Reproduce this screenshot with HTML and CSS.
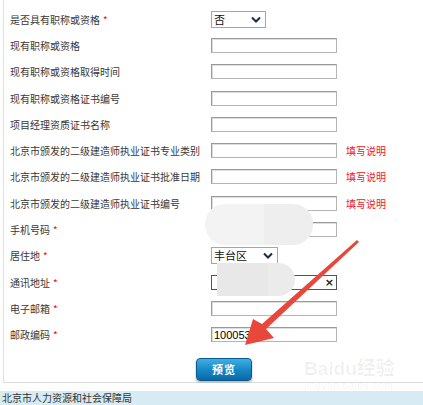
FILE: index.html
```html
<!DOCTYPE html>
<html lang="zh-CN">
<head>
    <meta charset="UTF-8">
    <title>信息填写</title>
    <link rel="stylesheet" href="styles.css">
</head>
<body>
    <div class="form">
        <div class="row">
            <label class="label">是否具有职称或资格<em>*</em></label>
            <div class="select short">
                <select><option>否</option></select>
                <svg width="10" height="7" viewBox="0 0 10 7"><path d="M1 1.5 L5 5.5 L9 1.5" fill="none" stroke="#1c2a4a" stroke-width="2"/></svg>
            </div>
        </div>
        <div class="row"><label class="label">现有职称或资格</label><input class="text" type="text"></div>
        <div class="row"><label class="label">现有职称或资格取得时间</label><input class="text" type="text"></div>
        <div class="row"><label class="label">现有职称或资格证书编号</label><input class="text" type="text"></div>
        <div class="row"><label class="label">项目经理资质证书名称</label><input class="text" type="text"></div>
        <div class="row">
            <label class="label">北京市颁发的二级建造师执业证书专业类别</label>
            <input class="text" type="text"><a class="note">填写说明</a>
        </div>
        <div class="row">
            <label class="label">北京市颁发的二级建造师执业证书批准日期</label>
            <input class="text" type="text"><a class="note">填写说明</a>
        </div>
        <div class="row">
            <label class="label">北京市颁发的二级建造师执业证书编号</label>
            <input class="text" type="text"><a class="note">填写说明</a>
        </div>
        <div class="row"><label class="label">手机号码<em>*</em></label><input class="text" type="text"></div>
        <div class="row">
            <label class="label">居住地<em>*</em></label>
            <div class="select wide">
                <select><option>丰台区</option></select>
                <svg width="10" height="7" viewBox="0 0 10 7"><path d="M1 1.5 L5 5.5 L9 1.5" fill="none" stroke="#1c2a4a" stroke-width="2"/></svg>
            </div>
        </div>
        <div class="row">
            <label class="label">通讯地址<em>*</em></label>
            <div class="clearable">
                <input type="text">
                <span class="clear">×</span>
            </div>
        </div>
        <div class="row"><label class="label">电子邮箱<em>*</em></label><input class="text" type="text"></div>
        <div class="row"><label class="label">邮政编码<em>*</em></label><input class="text" type="text" value="100053"></div>
        <div class="actions">
            <button class="btn" type="button">预览</button>
        </div>
    </div>
    <div class="footer">北京市人力资源和社会保障局</div>

    <!-- screenshot annotations -->
    <div class="blur blur-phone"></div>
    <div class="blur blur-addr"></div>
    <svg class="arrow" width="423" height="405" viewBox="0 0 423 405">
        <polygon points="245,345 253,319 262,324 357,240 359,242 266,329 274,338" fill="#e8483b"/>
    </svg>
    <div class="watermark">
        <div class="wm-logo">Bai<span class="paw">du</span>经验</div>
        <div class="wm-url">jingyan.baidu.com</div>
    </div>
</body>
</html>
```

FILE: styles.css
```css
body {
    margin: 0;
    font-family: "Noto Sans CJK SC", "Liberation Sans", sans-serif;
    font-size: 10px;
    color: #383838;
    background: #fff;
    overflow: hidden;
}

.form {
    box-sizing: border-box;
    height: 383px;
    margin-left: 3px;
    padding-top: 6px;
    border-left: 1px solid #e0e0e0;
    border-bottom: 1px solid #dcdcdc;
}

.row {
    display: flex;
    align-items: center;
    height: 26.3px;
    padding-left: 6px;
}

.label {
    width: 201px;
    flex-shrink: 0;
    white-space: nowrap;
}

.label em {
    font-style: normal;
    color: #f00;
    margin-left: 3px;
}

.text {
    box-sizing: border-box;
    width: 126px;
    height: 15px;
    margin: 0;
    padding: 0 2px;
    border: 1px solid #9a9a9a;
    border-right-color: #b5b5b5;
    border-bottom-color: #b5b5b5;
    box-shadow: inset 1px 1px 0 #dedede;
    font-family: "Liberation Sans", sans-serif;
    font-size: 11px;
    color: #000;
    outline: none;
}

.note {
    margin-left: 9px;
    color: #f0141e;
}

.select {
    box-sizing: border-box;
    display: flex;
    align-items: center;
    height: 17px;
    border: 1px solid #a6a6a6;
    background: #fff;
    padding-right: 4px;
}

.select.short { width: 55px; }
.select.wide { width: 67px; }

.select select {
    appearance: none;
    flex: 1;
    min-width: 0;
    border: none;
    background: transparent;
    padding: 0 0 0 2px;
    font-family: "Noto Sans CJK SC", sans-serif;
    font-size: 11px;
    line-height: 15px;
    color: #111;
    outline: none;
}

.clearable {
    box-sizing: border-box;
    display: flex;
    align-items: center;
    width: 126px;
    height: 15px;
    border: 1px solid #555;
    background: #fff;
}

.clearable input {
    flex: 1;
    min-width: 0;
    border: none;
    padding: 0;
    height: 13px;
    outline: none;
}

.clear {
    font-family: "DejaVu Sans", sans-serif;
    font-size: 11px;
    line-height: 11px;
    font-weight: bold;
    color: #222;
    margin-right: 2px;
}

.actions {
    padding: 10px 0 0 192px;
}

.btn {
    display: block;
    width: 56px;
    height: 23px;
    border: 1px solid #0a5a8c;
    border-radius: 4px;
    background: linear-gradient(#3fb0e4, #1789c6 50%, #0b6aa6);
    box-shadow: 0 1px 2px rgba(0, 0, 0, 0.35);
    color: #fff;
    font-family: "Noto Sans CJK SC", sans-serif;
    font-size: 11px;
    font-weight: bold;
    letter-spacing: 1px;
    cursor: pointer;
}

.footer {
    margin-top: 8px;
    height: 16px;
    line-height: 14px;
    padding-left: 2px;
    background: #d7ebf4;
    color: #333;
}

.blur {
    position: absolute;
    pointer-events: none;
}

.blur-phone {
    left: 205px;
    top: 204px;
    width: 108px;
    height: 41px;
    border-radius: 20px;
    background: linear-gradient(90deg, #f3f3f3 55%, #eeeeee 55%);
}

.blur-addr {
    left: 217px;
    top: 263px;
    width: 78px;
    height: 33px;
    border-radius: 0 17px 17px 0;
    background: linear-gradient(90deg, #e8e8e8 65%, #ebebeb 65%);
}

.arrow {
    position: absolute;
    left: 0;
    top: 0;
    pointer-events: none;
}

.watermark {
    position: absolute;
    left: 304px;
    top: 358px;
    color: rgba(0, 0, 0, 0.06);
    pointer-events: none;
    font-family: "Liberation Sans", "Noto Sans CJK SC", sans-serif;
}

.wm-logo {
    font-size: 19px;
    font-weight: bold;
    line-height: 22px;
    white-space: nowrap;
}

.wm-url {
    font-size: 10px;
    line-height: 11px;
    letter-spacing: 0.5px;
}
```
